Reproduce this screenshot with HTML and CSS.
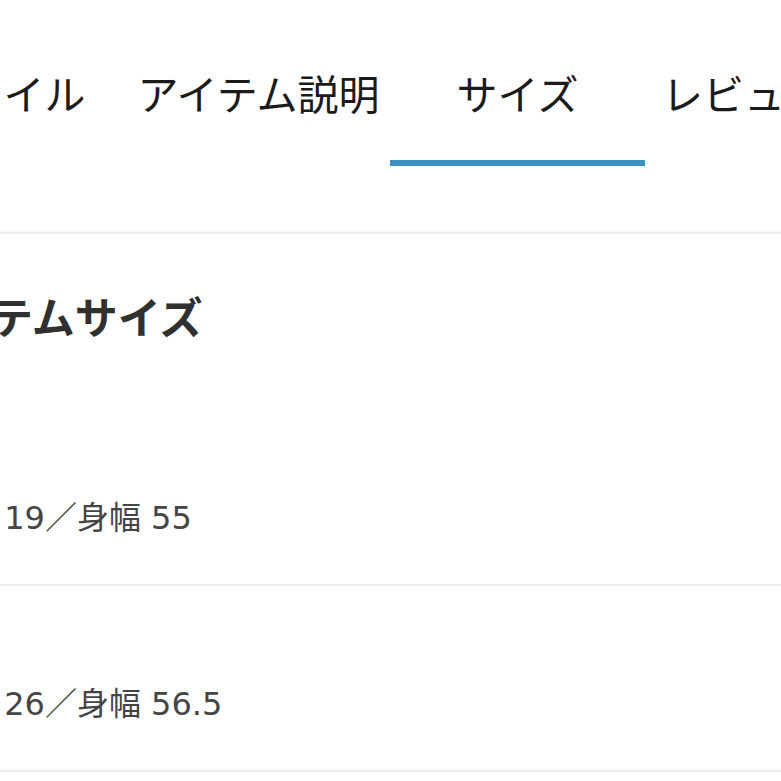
FILE: index.html
```html
<!DOCTYPE html>
<html lang="ja">

<head>
  <meta charset="UTF-8" />
  <meta name="viewport" content="width=device-width, initial-scale=1.0" />
  <title>サイズ</title>
  <link rel="stylesheet" href="styles.css">
</head>

<body>
  <div class="sheet">
    <nav class="tabs">
      <a class="tab" href="#">スタイル</a>
      <a class="tab" href="#">アイテム説明</a>
      <a class="tab active" href="#">サイズ</a>
      <a class="tab tab-last" href="#">レビュー</a>
    </nav>

    <section class="size-section">
      <h2 class="section-title">アイテムサイズ</h2>
      <ul class="size-list">
        <li class="size-row"><span class="size-text">袖丈 19／身幅 55</span></li>
        <li class="size-row"><span class="size-text">袖丈 26／身幅 56.5</span></li>
      </ul>
    </section>
  </div>
</body>

</html>
```

FILE: styles.css
```css
html,
body {
  margin: 0;
  padding: 0;
  background: #fff;
  overflow: hidden;
}

body {
  width: 781px;
  font-family: "Noto Sans CJK JP", sans-serif;
}

/* the page is wider than the window, we only see a slice of it */
.sheet {
  margin-left: -120px;
  width: 1100px;
}

.tabs {
  display: flex;
}

.tab {
  flex: 0 0 255px;
  box-sizing: border-box;
  padding: 72px 8px 47px 0;
  border-bottom: 6px solid transparent;
  font-size: 41px;
  line-height: 41px;
  color: #1b1b1b;
  text-align: center;
  text-decoration: none;
  white-space: nowrap;
}

.tab.active {
  padding-right: 0;
  border-bottom-color: #3a92be;
}

.tab-last {
  text-align: left;
  padding-left: 17px;
}

.size-section {
  margin-top: 66px;
  border-top: 2px solid #ededed;
  box-shadow: 0 -1px 2px rgba(0, 0, 0, 0.03);
}

.section-title {
  margin: 60px 0 0;
  padding-left: 27px;
  font-size: 43px;
  line-height: 43px;
  font-weight: bold;
  color: #303030;
}

.size-list {
  list-style: none;
  margin: 63px 0 0;
  padding: 0;
}

.size-row {
  padding: 102px 0 49px 50px;
  border-bottom: 2px solid #ededed;
}

.size-text {
  display: block;
  font-family: "DejaVu Sans", "Noto Sans CJK JP", sans-serif;
  font-size: 32px;
  line-height: 33px;
  color: #454545;
}
```
